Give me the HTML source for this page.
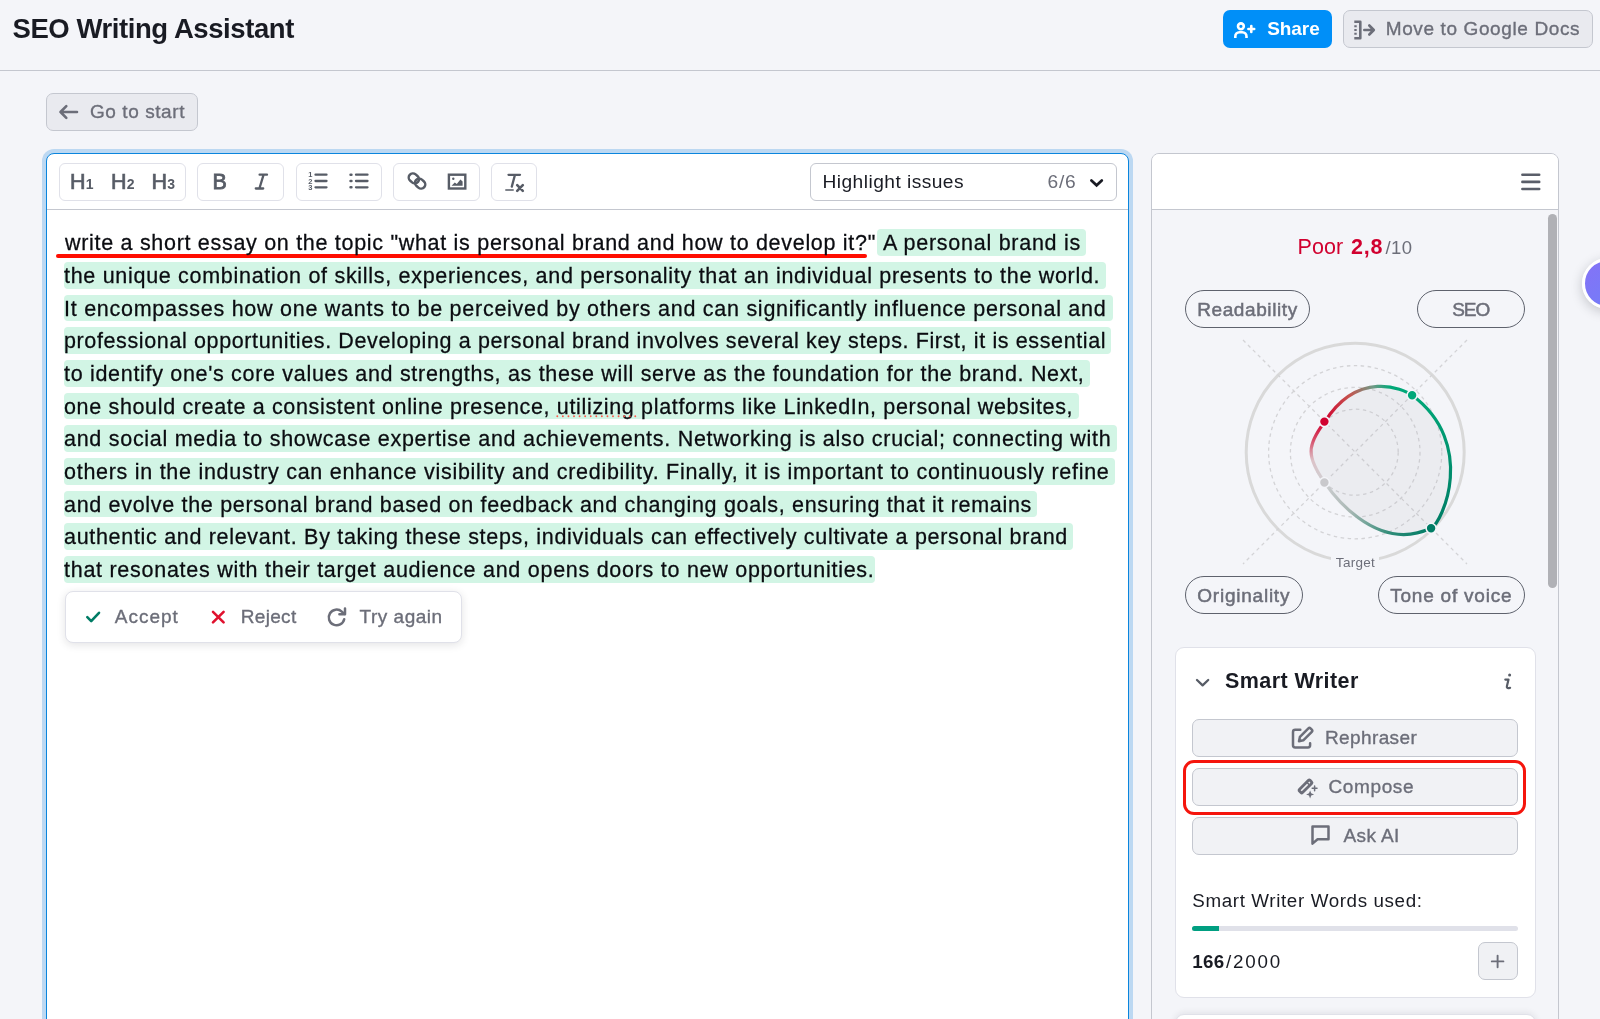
<!DOCTYPE html>
<html lang="en">
<head>
<meta charset="utf-8">
<title>SEO Writing Assistant</title>
<style>
*{box-sizing:border-box;margin:0;padding:0}
html,body{width:1600px;height:1019px;overflow:hidden}
body{background:#f4f5f9;font-family:"Liberation Sans",Arial,sans-serif;color:#191b23;position:relative}
.abs{position:absolute}
.t{position:absolute;white-space:nowrap;line-height:1}
/* header */
#title{left:12.500px;top:13.800px;font-size:27.500px;font-weight:700;color:#191b23;line-height:30px}
#hline{left:0;top:70px;width:1600px;height:1.3px;background:#c4c7cf}
.btn{position:absolute;border-radius:7px;border:1.3px solid #c4c7cf;background:#e9eaef;color:#6c6e79;font-size:18.6px;font-weight:500}
#share{left:1223px;top:10px;width:109px;height:38px;background:#008ff8;border:none;border-radius:7px;color:#fff}
#gdocs{left:1343px;top:10px;width:250px;height:38px}
#gostart{left:46px;top:93px;width:152px;height:38px}
/* editor */
#editor{left:46px;top:153px;width:1083px;height:900px;background:#fff;border:1.5px solid #0a85dd;border-radius:8px 8px 0 0;box-shadow:0 0 0 4px #bcd8f2}
#tline{left:47px;top:209px;width:1081px;height:1.3px;background:#c4c7cf}
.grp{position:absolute;top:163px;height:38px;border:1.3px solid #e0e1e9;border-radius:6px;background:#fff}
#hl{left:810px;top:163px;width:307px;height:38px;border:1.3px solid #c4c7cf;border-radius:6px;background:#fff;position:absolute}
.hd{font-size:21.500px;color:#575c66;-webkit-text-stroke:0.7px #575c66}
.sub{font-size:14px;font-weight:700;-webkit-text-stroke:0;margin-left:0.300px;letter-spacing:0}
/* text */
.ln{position:absolute;left:64px;height:26px;white-space:nowrap;font-size:21.500px;line-height:26px;color:#0b0c11;-webkit-text-stroke:0.28px #0b0c11}
.hlbg{position:absolute;background:#d2f5e5;border-radius:4px;height:26.800px}
/* panel */
#panel{left:1151px;top:153px;width:408px;height:900px;background:#f4f5f9;border:1.3px solid #c4c7cf;border-radius:8px 8px 0 0;overflow:hidden}
#phead{left:0;top:0;width:408px;height:56px;background:#fff;border-bottom:1.3px solid #c4c7cf}
.pill{position:absolute;height:37.800px;border:1.400px solid #5e626d;border-radius:19px;color:#6c6e79;font-size:19px;font-weight:400;-webkit-text-stroke:0.5px #6c6e79;text-align:center;line-height:37.300px}
#card{left:1174.700px;top:647.300px;width:361px;height:350.500px;background:#fff;border:1.3px solid #e0e1e9;border-radius:9px}
#card2{left:1174.700px;top:1013.600px;width:361px;height:50px;background:#fff;border:1.3px solid #e0e1e9;border-radius:9px;box-shadow:0 -1px 7px rgba(25,27,35,.09)}
.sbtn{position:absolute;left:1192.300px;width:325.400px;height:37px;border:1.3px solid #c4c7cf;border-radius:7px;background:#f1f2f5}
</style>
</head>
<body>
<div id="root" style="position:absolute;left:0;top:0;width:1600px;height:1019px;will-change:transform">
<!-- HEADER -->
<div class="t" id="title" style="letter-spacing:-0.425px">SEO Writing Assistant</div>
<div class="abs" id="hline"></div>
<div class="btn" id="share">
<svg class="abs" style="left:10px;top:9px" width="24" height="22" viewBox="0 0 24 22" fill="none" stroke="#fff" stroke-width="2.6" stroke-linecap="butt" stroke-linejoin="round"><circle cx="7.9" cy="7.3" r="2.9"/><path d="M2.300 19v-1.500a4.200 4.200 0 0 1 4.200-4.200h2.800a4.200 4.200 0 0 1 4.200 4.200V19"/><path d="M18.300 7.100v5.800M15.400 10h5.800" stroke-linecap="round"/></svg>
<span class="t" id="tshare" style="left:44.200px;top:9px;font-size:19px;font-weight:700;letter-spacing:-0.062px">Share</span></div>
<div class="btn" id="gdocs">
<svg class="abs" style="left:8.300px;top:7px" width="26" height="24" viewBox="0 0 26 24" fill="none" stroke="#6c6e79" stroke-width="2.6" stroke-linecap="butt" stroke-linejoin="round"><path d="M2.300 3.800h6v16.400h-6"/><path d="M2.300 8.200h2.400M2.300 12h2.400M2.300 15.800h2.400" stroke-width="2"/><path d="M12.300 12h9M17.300 7.500l4.500 4.500-4.500 4.500" stroke-linecap="round"/></svg>
<span class="t" id="tgdocs" style="left:41.700px;top:7.700px;font-size:19px;letter-spacing:0.621px;-webkit-text-stroke:0.35px #6c6e79">Move to Google Docs</span></div>
<div class="btn" id="gostart">
<svg class="abs" style="left:10px;top:9px" width="24" height="18" viewBox="0 0 24 18" fill="none" stroke="#6c6e79" stroke-width="2.600" stroke-linecap="round" stroke-linejoin="round"><path d="M20 9H3.500M9.300 3.200L3.500 9l5.800 5.800"/></svg>
<span class="t" id="tgostart" style="left:43px;top:7.900px;font-size:19px;letter-spacing:0.572px;-webkit-text-stroke:0.35px #6c6e79">Go to start</span></div>

<!-- EDITOR -->
<div class="abs" id="editor"></div>
<div class="abs" id="tline"></div>
<div class="grp" style="left:59px;width:127px"></div>
<div class="grp" style="left:197px;width:87px"></div>
<div class="grp" style="left:295.5px;width:86.5px"></div>
<div class="grp" style="left:393px;width:87px"></div>
<div class="grp" style="left:491px;width:46px"></div>
<div id="hl"></div>


<!-- TOOLBAR ICONS -->
<div class="t hd" style="left:70px;top:172px">H<span class="sub">1</span></div>
<div class="t hd" style="left:111px;top:172px">H<span class="sub">2</span></div>
<div class="t hd" style="left:151.500px;top:172px">H<span class="sub">3</span></div>
<div class="t" id="icB" style="left:212.500px;top:171.800px;font-size:21.500px;color:#575c66;-webkit-text-stroke:0.8px #575c66">B</div>
<svg class="abs" style="left:252px;top:171px" width="20" height="20" viewBox="0 0 20 20" fill="none" stroke="#575c66" stroke-width="2.300" stroke-linecap="round"><path d="M7.600 3.700h7.400M3.800 17.500h7.400M11.600 3.700L7.400 17.500"/></svg>
<svg class="abs" style="left:307px;top:170px" width="24" height="22" viewBox="0 0 24 22" fill="none" stroke="#575c66" stroke-width="2.300" stroke-linecap="round"><path d="M8.500 4.700h11M8.500 11h11M8.500 17.300h11"/><g stroke="none" fill="#575c66" font-family="Liberation Sans,Arial,sans-serif" font-weight="700" font-size="7.500"><text x="1.200" y="7.400">1</text><text x="1.200" y="13.700">2</text><text x="1.200" y="20">3</text></g></svg>
<svg class="abs" style="left:347px;top:170px" width="24" height="22" viewBox="0 0 24 22" fill="none" stroke="#575c66" stroke-width="2.300" stroke-linecap="round"><path d="M9 4.700h11.500M9 11h11.500M9 17.300h11.500"/><path d="M3.600 4.700h.8M3.600 11h.8M3.600 17.300h.8" stroke-width="2.600"/></svg>
<svg class="abs" style="left:405px;top:170px" width="24" height="22" viewBox="0 0 24 22" fill="none" stroke="#575c66" stroke-width="2.500" stroke-linecap="round" stroke-linejoin="round"><g transform="rotate(40 12 11)"><rect x="2.500" y="6.800" width="10.800" height="8.400" rx="4.200"/><rect x="10.700" y="6.800" width="10.800" height="8.400" rx="4.200"/></g></svg>
<svg class="abs" style="left:446px;top:171px" width="22" height="20" viewBox="0 0 22 20" fill="none" stroke="#575c66" stroke-width="2.400" stroke-linejoin="miter"><rect x="2.900" y="3.700" width="16.400" height="13.800"/><path d="M5.500 14.800l3.300-3.300 2 1.600 3.600-4.500 2.200 2v4.200z" fill="#575c66" stroke="none"/><circle cx="7.300" cy="7.700" r="1.200" fill="#575c66" stroke="none"/></svg>
<svg class="abs" style="left:503px;top:170px" width="24" height="24" viewBox="0 0 24 24" fill="none" stroke="#575c66" stroke-width="2.300" stroke-linecap="round"><path d="M5.500 4.800h11.500M12 4.800L8.800 16.600"/><path d="M2.800 20h7.400" stroke-width="1.500"/><path d="M14.200 15.200l5.600 5.600M19.800 15.200l-5.600 5.600" stroke-width="2.600"/></svg>
<!-- DROPDOWN -->
<span class="t" id="thl" style="left:822.500px;top:171.600px;font-size:19.200px;letter-spacing:0.444px;color:#191b23">Highlight issues</span>
<span class="t" id="t66" style="left:1047.500px;top:171.600px;font-size:19.200px;letter-spacing:0.771px;color:#6c6e79">6/6</span>
<svg class="abs" style="left:1087px;top:173px" width="20" height="18" viewBox="0 0 20 18" fill="none" stroke="#191b23" stroke-width="2.700" stroke-linecap="round" stroke-linejoin="miter"><path d="M4.400 7.400l5.200 4.900 5.200-4.900"/></svg>

<!-- BODY TEXT -->
<div class="hlbg" style="left:877px;top:229.3px;width:208.8px"></div>
<div class="hlbg" style="left:63.5px;top:262.0px;width:1042.0px"></div>
<div class="hlbg" style="left:63.5px;top:294.6px;width:1049.0px"></div>
<div class="hlbg" style="left:63.5px;top:327.3px;width:1047.9px"></div>
<div class="hlbg" style="left:63.5px;top:359.9px;width:1026.8px"></div>
<div class="hlbg" style="left:63.5px;top:392.6px;width:1015.1px"></div>
<div class="hlbg" style="left:63.5px;top:425.3px;width:1053.3px"></div>
<div class="hlbg" style="left:63.5px;top:457.9px;width:1051.0px"></div>
<div class="hlbg" style="left:63.5px;top:490.6px;width:973.5px"></div>
<div class="hlbg" style="left:63.5px;top:523.2px;width:1009.5px"></div>
<div class="hlbg" style="left:63.5px;top:555.9px;width:811.1px"></div>
<div class="abs" id="redline" style="left:56px;top:253.900px;width:811px;height:3.700px;background:#ff0d00;border-radius:2px"></div>
<div class="ln" style="top:230.3px;left:65px"><span id="l1a" style="letter-spacing:0.699px">write a short essay on the topic "what is personal brand and how to develop it?"</span></div>
<div class="ln" style="top:230.3px;left:883px"><span id="l1b" style="letter-spacing:0.734px">A personal brand is</span></div>
<div class="ln" style="top:263.0px"><span id="l2" style="letter-spacing:0.702px">the unique combination of skills, experiences, and personality that an individual presents to the world.</span></div>
<div class="ln" style="top:295.6px"><span id="l3" style="letter-spacing:0.739px">It encompasses how one wants to be perceived by others and can significantly influence personal and</span></div>
<div class="ln" style="top:328.3px"><span id="l4" style="letter-spacing:0.621px">professional opportunities. Developing a personal brand involves several key steps. First, it is essential</span></div>
<div class="ln" style="top:360.9px"><span id="l5" style="letter-spacing:0.690px">to identify one's core values and strengths, as these will serve as the foundation for the brand. Next,</span></div>
<div class="ln" style="top:393.6px"><span id="l6" style="letter-spacing:0.656px">one should create a consistent online presence, <span id="util">utilizing</span> platforms like LinkedIn, personal websites,</span></div>
<div class="ln" style="top:426.3px"><span id="l7" style="letter-spacing:0.723px">and social media to showcase expertise and achievements. Networking is also crucial; connecting with</span></div>
<div class="ln" style="top:458.9px"><span id="l8" style="letter-spacing:0.723px">others in the industry can enhance visibility and credibility. Finally, it is important to continuously refine</span></div>
<div class="ln" style="top:491.6px"><span id="l9" style="letter-spacing:0.687px">and evolve the personal brand based on feedback and changing goals, ensuring that it remains</span></div>
<div class="ln" style="top:524.2px"><span id="l10" style="letter-spacing:0.691px">authentic and relevant. By taking these steps, individuals can effectively cultivate a personal brand</span></div>
<div class="ln" style="top:556.9px"><span id="l11" style="letter-spacing:0.728px">that resonates with their target audience and opens doors to new opportunities.</span></div>


<svg class="abs" id="utildots" style="left:555px;top:414px" width="84" height="5" viewBox="0 0 84 5" fill="none"><path d="M2.300 2.300H80.500" stroke="#ff5a4d" stroke-width="1.900" stroke-linecap="round" stroke-dasharray="0 5.570"/></svg>
<!-- ACCEPT BAR -->
<div class="abs" id="abar" style="left:64.500px;top:590.500px;width:397px;height:52.500px;background:#fff;border:1.3px solid #e0e1e9;border-radius:8px;box-shadow:0 2px 8px rgba(25,27,35,.12)"></div>
<svg class="abs" style="left:84px;top:606px" width="20" height="20" viewBox="0 0 20 20" fill="none" stroke="#007c65" stroke-width="2.600" stroke-linecap="round" stroke-linejoin="round"><path d="M3.300 11.200l3.900 3.900 7.800-8.300"/></svg>
<span class="t" id="tacc" style="left:114.800px;top:607px;font-size:19px;letter-spacing:1.001px;color:#6c6e79;-webkit-text-stroke:0.35px #6c6e79">Accept</span>
<svg class="abs" style="left:208px;top:607px" width="20" height="20" viewBox="0 0 20 20" fill="none" stroke="#e0112e" stroke-width="2.600" stroke-linecap="round"><path d="M5 4.800l10.600 10.600M15.600 4.800L5 15.400"/></svg>
<span class="t" id="trej" style="left:240.800px;top:607px;font-size:19px;letter-spacing:0.307px;color:#6c6e79;-webkit-text-stroke:0.35px #6c6e79">Reject</span>
<svg class="abs" style="left:325px;top:605px" width="24" height="24" viewBox="0 0 24 24" fill="none" stroke="#6c6e79" stroke-width="2.500" stroke-linecap="round" stroke-linejoin="round"><path d="M19.200 14.200a7.800 7.800 0 1 1-2.400-7.600l2.600 2.300"/><path d="M20 3.600v5.600h-5.600"/></svg>
<span class="t" id="ttry" style="left:359.500px;top:607px;font-size:19px;letter-spacing:0.522px;color:#6c6e79;-webkit-text-stroke:0.35px #6c6e79">Try again</span>

<!-- PANEL -->
<div class="abs" id="panel"><div class="abs" id="phead"></div></div>

<!-- PANEL CONTENT -->
<svg class="abs" style="left:1519px;top:170px" width="24" height="24" viewBox="0 0 24 24" fill="none" stroke="#5a5e69" stroke-width="2.600" stroke-linecap="round"><path d="M3.400 4.800h16.800M3.400 11.900h16.800M3.400 19h16.800"/></svg>
<div class="abs" id="scroll" style="left:1548px;top:214px;width:8.500px;height:374px;border-radius:4.500px;background:#b0b1b6"></div>
<span class="t" id="tpoor" style="left:1297.500px;top:236.500px;font-size:21.500px;color:#d1002f;letter-spacing:0.120px">Poor</span>
<span class="t" id="t28" style="left:1351px;top:236.500px;font-size:21.500px;color:#d1002f;font-weight:700;letter-spacing:0.836px">2,8</span>
<span class="t" id="t10" style="left:1385.500px;top:238.800px;font-size:18.500px;color:#6c6e79;letter-spacing:0.427px">/10</span>
<div class="pill" style="left:1185px;top:290.200px;width:125px"><span id="p1" style="letter-spacing:0.604px">Readability</span></div>
<div class="pill" style="left:1416.500px;top:290.200px;width:108.500px"><span id="p2" style="letter-spacing:-0.992px">SEO</span></div>
<div class="pill" style="left:1185px;top:576.200px;width:117.500px"><span id="p3" style="letter-spacing:0.763px">Originality</span></div>
<div class="pill" style="left:1377.500px;top:576.200px;width:147.500px"><span id="p4" style="letter-spacing:0.791px">Tone of voice</span></div>
<!-- RADAR -->
<svg class="abs" id="radar" style="left:1235px;top:332px" width="240" height="250" viewBox="1235 332 240 250" fill="none">
<defs>
<linearGradient id="g1" gradientUnits="userSpaceOnUse" x1="1324" y1="421" x2="1412" y2="395"><stop offset="0" stop-color="#d1002f"/><stop offset="0.35" stop-color="#c4554f"/><stop offset="0.62" stop-color="#6e9a86"/><stop offset="0.8" stop-color="#00a878"/><stop offset="1" stop-color="#00a878"/></linearGradient>
<linearGradient id="g2" gradientUnits="userSpaceOnUse" x1="1412" y1="395" x2="1431" y2="528"><stop offset="0" stop-color="#00a878"/><stop offset="1" stop-color="#007c65"/></linearGradient>
<linearGradient id="g3" gradientUnits="userSpaceOnUse" x1="1431" y1="528" x2="1324" y2="482"><stop offset="0" stop-color="#007c65"/><stop offset="0.3" stop-color="#2f8c78"/><stop offset="0.7" stop-color="#a9b8b4"/><stop offset="1" stop-color="#cfcfd2"/></linearGradient>
<linearGradient id="g4" gradientUnits="userSpaceOnUse" x1="1320" y1="482" x2="1320" y2="421"><stop offset="0" stop-color="#cfcfd2"/><stop offset="0.35" stop-color="#dcc3c8"/><stop offset="0.7" stop-color="#d64a66"/><stop offset="1" stop-color="#d1002f"/></linearGradient>
</defs>
<circle cx="1355.200" cy="452.200" r="109" stroke="#d9d9d9" stroke-width="3"/>
<g stroke="#d3d3d6" stroke-width="1.300" stroke-dasharray="3.500 3.500">
<circle cx="1355.200" cy="452.200" r="86.600"/><circle cx="1355.200" cy="452.200" r="64.800"/><circle cx="1355.200" cy="452.200" r="43"/>
<path d="M1243 340L1467 564M1467 340L1243 564"/>
</g>
<path id="blob" d="M1324.8 421.8 C1358.0 369.8 1402.9 388.4 1412.2 395.3 C1477.1 443.7 1442.7 522.8 1430.8 528.3 C1372.4 555.2 1326.4 484.9 1324.8 482.7 C1306.5 456.7 1306.5 445.7 1324.8 421.8Z" fill="rgba(160,162,175,0.11)"/>
<path id="s1" d="M1324.8 421.8 C1358.0 369.8 1402.9 388.4 1412.2 395.3" stroke="url(#g1)" stroke-width="3.200" stroke-linecap="round"/>
<path id="s2" d="M1412.2 395.3 C1477.1 443.7 1442.7 522.8 1430.8 528.3" stroke="url(#g2)" stroke-width="3.200" stroke-linecap="round"/>
<path id="s3" d="M1430.8 528.3 C1372.4 555.2 1326.4 484.9 1324.8 482.7" stroke="url(#g3)" stroke-width="3.200" stroke-linecap="round"/>
<path id="s4" d="M1324.8 482.7 C1306.5 456.7 1306.5 445.7 1324.8 421.8" stroke="url(#g4)" stroke-width="3.200" stroke-linecap="round"/>
<g stroke="#f4f5f9" stroke-width="1.600">
<circle cx="1324.400" cy="421.600" r="5" fill="#d1002f"/>
<circle cx="1412.100" cy="395.200" r="5" fill="#00a878"/>
<circle cx="1431.100" cy="528.300" r="5" fill="#007c65"/>
<circle cx="1324.400" cy="482.500" r="5" fill="#c9c9cc"/>
</g>
<rect x="1331" y="553" width="48" height="20" fill="#f4f5f9"/>
<text id="ttarget" x="1355.500" y="567.300" text-anchor="middle" font-family="Liberation Sans,Arial,sans-serif" font-size="13.500" fill="#6c6e79" letter-spacing="0.3">Target</text>
</svg>
<div class="abs" id="purple" style="left:1582px;top:257.500px;width:51px;height:51px;border-radius:50%;background:linear-gradient(135deg,#8572f6,#6f80f8);border:3px solid #fff;box-shadow:0 3px 12px rgba(25,27,35,.22)"></div>

<div class="abs" id="card"></div>
<div class="abs" id="card2"></div>

<!-- SMART WRITER -->
<svg class="abs" style="left:1192px;top:672px" width="22" height="22" viewBox="0 0 22 22" fill="none" stroke="#575c66" stroke-width="2.300" stroke-linecap="round" stroke-linejoin="round"><path d="M5 8l5.600 5.400L16.200 8"/></svg>
<span class="t" id="tsw" style="left:1225px;top:670.500px;font-size:21.500px;font-weight:700;letter-spacing:0.420px">Smart Writer</span>
<svg class="abs" style="left:1500px;top:670px" width="16" height="22" viewBox="0 0 16 22" fill="none" stroke="#575c66" stroke-width="2.200" stroke-linecap="round" stroke-linejoin="round"><path d="M5.300 9.600h3.200L6.900 16.200c-.3 1.400.6 2.100 1.700 1.900l1.500-.3"/><circle cx="9.600" cy="4.900" r="1.500" fill="#575c66" stroke="none"/></svg>
<div class="sbtn" style="top:719.200px;height:37.500px"></div>
<div class="sbtn" style="top:768.100px;height:37.700px"></div>
<div class="sbtn" style="top:817.200px;height:37.500px"></div>
<div class="abs" id="redbox" style="left:1183.400px;top:760px;width:343px;height:54.600px;border:3.300px solid #f5150d;border-radius:11px"></div>
<svg class="abs" style="left:1290px;top:726px" width="26" height="26" viewBox="0 0 26 26" fill="none" stroke="#6c6e79" stroke-width="2.500" stroke-linecap="round" stroke-linejoin="round"><path d="M10.300 3.700H5.200a2.200 2.200 0 0 0-2.200 2.200v13.300a2.200 2.200 0 0 0 2.200 2.200h12.700a2.200 2.200 0 0 0 2.200-2.200V17.200"/><path d="M9 15.200l.9-4.300 8.500-8.500a1.500 1.500 0 0 1 2.100 0l1.300 1.300a1.500 1.500 0 0 1 0 2.100l-8.500 8.500z"/></svg>
<span class="t" id="treph" style="left:1325px;top:728.2px;font-size:19px;letter-spacing:0.376px;color:#6c6e79;-webkit-text-stroke:0.35px #6c6e79">Rephraser</span>
<svg class="abs" style="left:1294px;top:775px" width="26" height="26" viewBox="0 0 26 26" fill="none" stroke="#6c6e79" stroke-width="2.300" stroke-linecap="round" stroke-linejoin="round"><g transform="rotate(45 11.500 11.450)"><rect x="9.300" y="3.900" width="4.400" height="15.100" rx="1.100" stroke-width="2.800"/><path d="M9.300 7.600h4.400" stroke-width="1.600"/></g><path d="M20.600 10.900v4.800M18.200 13.300h4.800" stroke-width="1.500"/><path d="M16.100 15.400l1.100 2.900 2.900 1.100-2.900 1.100-1.100 2.900-1.100-2.900-2.900-1.100 2.900-1.100z" fill="#6c6e79" stroke="none"/></svg>
<span class="t" id="tcomp" style="left:1328.500px;top:777.4px;font-size:19px;letter-spacing:0.625px;color:#6c6e79;-webkit-text-stroke:0.35px #6c6e79">Compose</span>
<svg class="abs" style="left:1308px;top:823px" width="26" height="26" viewBox="0 0 26 26" fill="none" stroke="#6c6e79" stroke-width="2.500" stroke-linecap="round" stroke-linejoin="round"><path d="M4.500 3.500h16v12.800H9.600L4.500 20.600z"/></svg>
<span class="t" id="task" style="left:1343.400px;top:825.9px;font-size:19px;letter-spacing:0.407px;color:#6c6e79;-webkit-text-stroke:0.35px #6c6e79">Ask AI</span>
<span class="t" id="twords" style="left:1192.300px;top:892.200px;font-size:18.800px;letter-spacing:0.623px;color:#191b23">Smart Writer Words used:</span>
<div class="abs" style="left:1192.300px;top:926px;width:325.700px;height:5.300px;border-radius:3px;background:#e0e1e9"></div>
<div class="abs" style="left:1192.300px;top:926px;width:27px;height:5.300px;border-radius:3px 0 0 3px;background:#009f81"></div>
<span class="t" id="t166" style="left:1192.300px;top:952.500px;font-size:18.800px;font-weight:700;letter-spacing:0.252px;color:#191b23">166</span>
<span class="t" id="t2000" style="left:1226px;top:952.500px;font-size:18.800px;letter-spacing:1.800px;color:#191b23">/2000</span>
<div class="abs" style="left:1477.700px;top:942.200px;width:40.300px;height:37.600px;border:1.300px solid #c4c7cf;border-radius:7px;background:#f0f1f4"></div>
<svg class="abs" style="left:1488px;top:952px" width="20" height="20" viewBox="0 0 20 20" fill="none" stroke="#6c6e79" stroke-width="1.900" stroke-linecap="round"><path d="M9.600 3.600v11.600M3.800 9.400h11.600"/></svg>

</div>
</body>
</html>
